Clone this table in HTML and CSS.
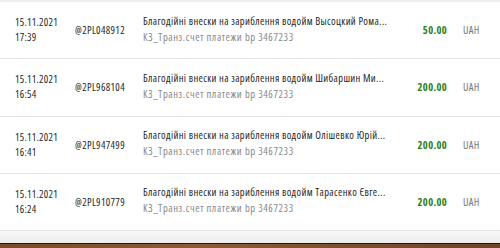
FILE: index.html
```html
<!DOCTYPE html>
<html lang="uk">
<head>
<meta charset="utf-8">
<link rel="stylesheet" href="styles.css">
</head>
<body>
<div class="page">
  <div class="list">
    <div class="row">
      <div class="date">15.11.2021<br>17:39</div>
      <div class="ref">@2PL048912</div>
      <div class="desc">
        <div class="title">Благодійні внески на зариблення водойм Высоцкий Рома...</div>
        <div class="sub">КЗ_Транз.счет платежи bp 3467233</div>
      </div>
      <div class="amount">50.00</div>
      <div class="cur">UAH</div>
    </div>
    <div class="row">
      <div class="date">15.11.2021<br>16:54</div>
      <div class="ref">@2PL968104</div>
      <div class="desc">
        <div class="title">Благодійні внески на зариблення водойм Шибаршин Ми...</div>
        <div class="sub">КЗ_Транз.счет платежи bp 3467233</div>
      </div>
      <div class="amount">200.00</div>
      <div class="cur">UAH</div>
    </div>
    <div class="row">
      <div class="date">15.11.2021<br>16:41</div>
      <div class="ref">@2PL947499</div>
      <div class="desc">
        <div class="title">Благодійні внески на зариблення водойм Олішевко Юрій...</div>
        <div class="sub">КЗ_Транз.счет платежи bp 3467233</div>
      </div>
      <div class="amount">200.00</div>
      <div class="cur">UAH</div>
    </div>
    <div class="row">
      <div class="date">15.11.2021<br>16:24</div>
      <div class="ref">@2PL910779</div>
      <div class="desc">
        <div class="title">Благодійні внески на зариблення водойм Тарасенко Євге...</div>
        <div class="sub">КЗ_Транз.счет платежи bp 3467233</div>
      </div>
      <div class="amount">200.00</div>
      <div class="cur">UAH</div>
    </div>
  </div>
  <div class="shade"></div>
  <div class="desk"></div>
</div>
</body>
</html>
```

FILE: styles.css
```css
* { box-sizing: border-box; }
html, body { margin: 0; padding: 0; }
body {
  width: 500px;
  height: 248px;
  overflow: hidden;
  background: #fff;
  font-family: "Open Sans", "Noto Sans", sans-serif;
  font-size: 10.5px;
  font-stretch: 75%;
  letter-spacing: 0.35px;
  color: #1f1f1f;
}
.page {
  display: flex;
  flex-direction: column;
  height: 248px;
}
.list {
  border-top: 2px solid #efefef;
}
.row {
  display: flex;
  align-items: center;
  height: 57.25px;
  border-bottom: 1px solid #e3e3e3;
  padding-left: 15px;
}
.date {
  width: 60px;
  line-height: 15px;
  letter-spacing: 0.25px;
}
.ref {
  width: 68px;
}
.desc {
  width: 250px;
  line-height: 16px;
  overflow: hidden;
  padding-bottom: 3px;
}
.title {
  white-space: nowrap;
  overflow: hidden;
}
.sub {
  color: #888;
  white-space: nowrap;
  letter-spacing: 0.6px;
}
.amount {
  width: 54px;
  text-align: right;
  color: #2f7d12;
  font-weight: 700;
}
.cur {
  margin-left: 16px;
  color: #777;
}
.shade {
  flex: 1;
  background: linear-gradient(#f7f7f7, #ececec);
}
.desk {
  height: 5px;
  border-top: 1px solid #1a1a1a;
  background: linear-gradient(90deg, #7a4a2a, #8c5a35 40%, #6e4428);
}
```
